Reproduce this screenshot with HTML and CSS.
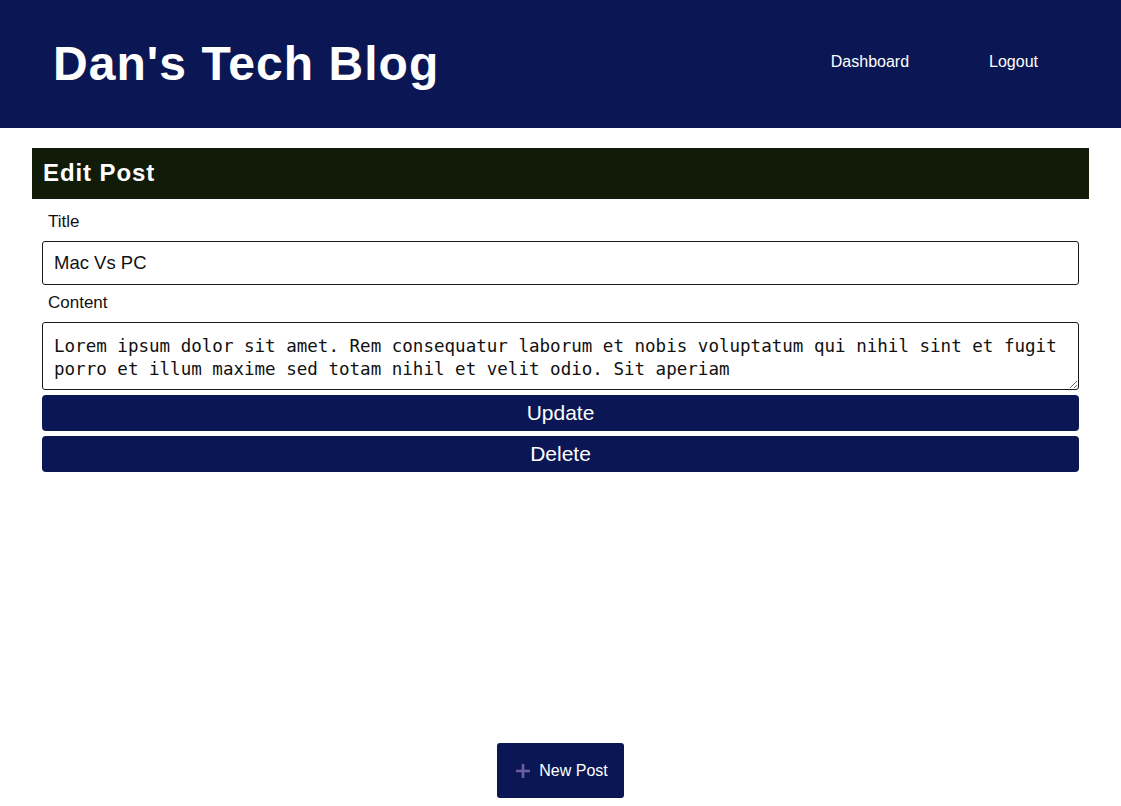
FILE: index.html
```html
<!DOCTYPE html>
<html>
<head>
<meta charset="utf-8">
<link rel="stylesheet" href="styles.css">
</head>
<body>
<header class="site-header">
  <h1 class="brand">Dan's Tech Blog</h1>
  <nav class="nav">
    <a href="#" class="nav-link">Dashboard</a>
    <a href="#" class="nav-link">Logout</a>
  </nav>
</header>
<main class="main">
  <section class="card">
    <h2 class="card-title">Edit Post</h2>
    <form class="form">
      <label class="label">Title</label>
      <input class="input" type="text" value="Mac Vs PC">
      <label class="label">Content</label>
      <textarea class="textarea" rows="2">Lorem ipsum dolor sit amet. Rem consequatur laborum et nobis voluptatum qui nihil sint et fugit porro et illum maxime sed totam nihil et velit odio. Sit aperiam</textarea>
      <button type="button" class="btn">Update</button>
      <button type="button" class="btn">Delete</button>
    </form>
  </section>
</main>
<footer class="footer">
  <button type="button" class="new-post">
    <svg class="plus" width="16" height="16" viewBox="0 0 16 16"><path d="M8 1v14M1 8h14" stroke="#6b5fa0" stroke-width="2.6" fill="none"/></svg>
    <span>New Post</span>
  </button>
</footer>
</body>
</html>
```
FILE: styles.css
```css
html, body {
  margin: 0;
  padding: 0;
}
body {
  font-family: "Liberation Sans", Arial, sans-serif;
  min-height: 100vh;
  display: flex;
  flex-direction: column;
  background: #fff;
  color: #111;
}
.site-header {
  background: #0b1754;
  height: 128px;
  display: flex;
  align-items: center;
  justify-content: space-between;
  padding: 0 83px 0 53px;
  box-sizing: border-box;
}
.brand {
  margin: 0 0 2px 0;
  color: #fff;
  font-size: 48px;
  font-weight: bold;
  letter-spacing: 1.05px;
}
.nav {
  display: flex;
  gap: 80px;
  margin-bottom: 4px;
}
.nav-link {
  color: #fff;
  text-decoration: none;
  font-size: 16px;
}
.main {
  padding: 20px 32px 0;
}
.card-title {
  margin: 0;
  background: #101b08;
  color: #fff;
  height: 51px;
  line-height: 50px;
  padding: 0 11px;
  font-size: 24px;
  font-weight: bold;
  letter-spacing: 0.9px;
}
.form {
  display: flex;
  flex-direction: column;
  padding: 0 10px;
}
.label {
  font-size: 17px;
  color: #111;
  padding-left: 6px;
  margin-top: 14px;
  margin-bottom: 10px;
  line-height: 18px;
}
.input {
  height: 44px;
  box-sizing: border-box;
  border: 1px solid #1a1a1a;
  border-radius: 3px;
  font-family: "Liberation Sans", Arial, sans-serif;
  font-size: 18.5px;
  padding: 0 11px;
  color: #111;
}
.input + .label {
  margin-top: 9px;
  margin-bottom: 10px;
}
.textarea {
  height: 68px;
  box-sizing: border-box;
  border: 1px solid #1a1a1a;
  border-radius: 3px;
  font-family: "DejaVu Sans Mono", "Liberation Mono", monospace;
  font-size: 17.55px;
  line-height: 23px;
  padding: 12px 11px 8px;
  color: #111;
  resize: vertical;
}
.btn {
  margin-top: 5px;
  height: 36px;
  background: #0b1754;
  color: #fff;
  border: none;
  border-radius: 4px;
  font-family: "Liberation Sans", Arial, sans-serif;
  font-size: 21px;
  padding: 0;
}
.footer {
  margin-top: auto;
  display: flex;
  justify-content: center;
  padding-bottom: 8px;
}
.new-post {
  width: 127px;
  height: 55px;
  background: #0b1754;
  color: #fff;
  border: none;
  border-radius: 3px;
  font-family: "Liberation Sans", Arial, sans-serif;
  font-size: 16px;
  display: flex;
  align-items: center;
  justify-content: center;
  gap: 8px;
  padding: 0 0 0 2px;
}
.plus {
  display: block;
}
```
